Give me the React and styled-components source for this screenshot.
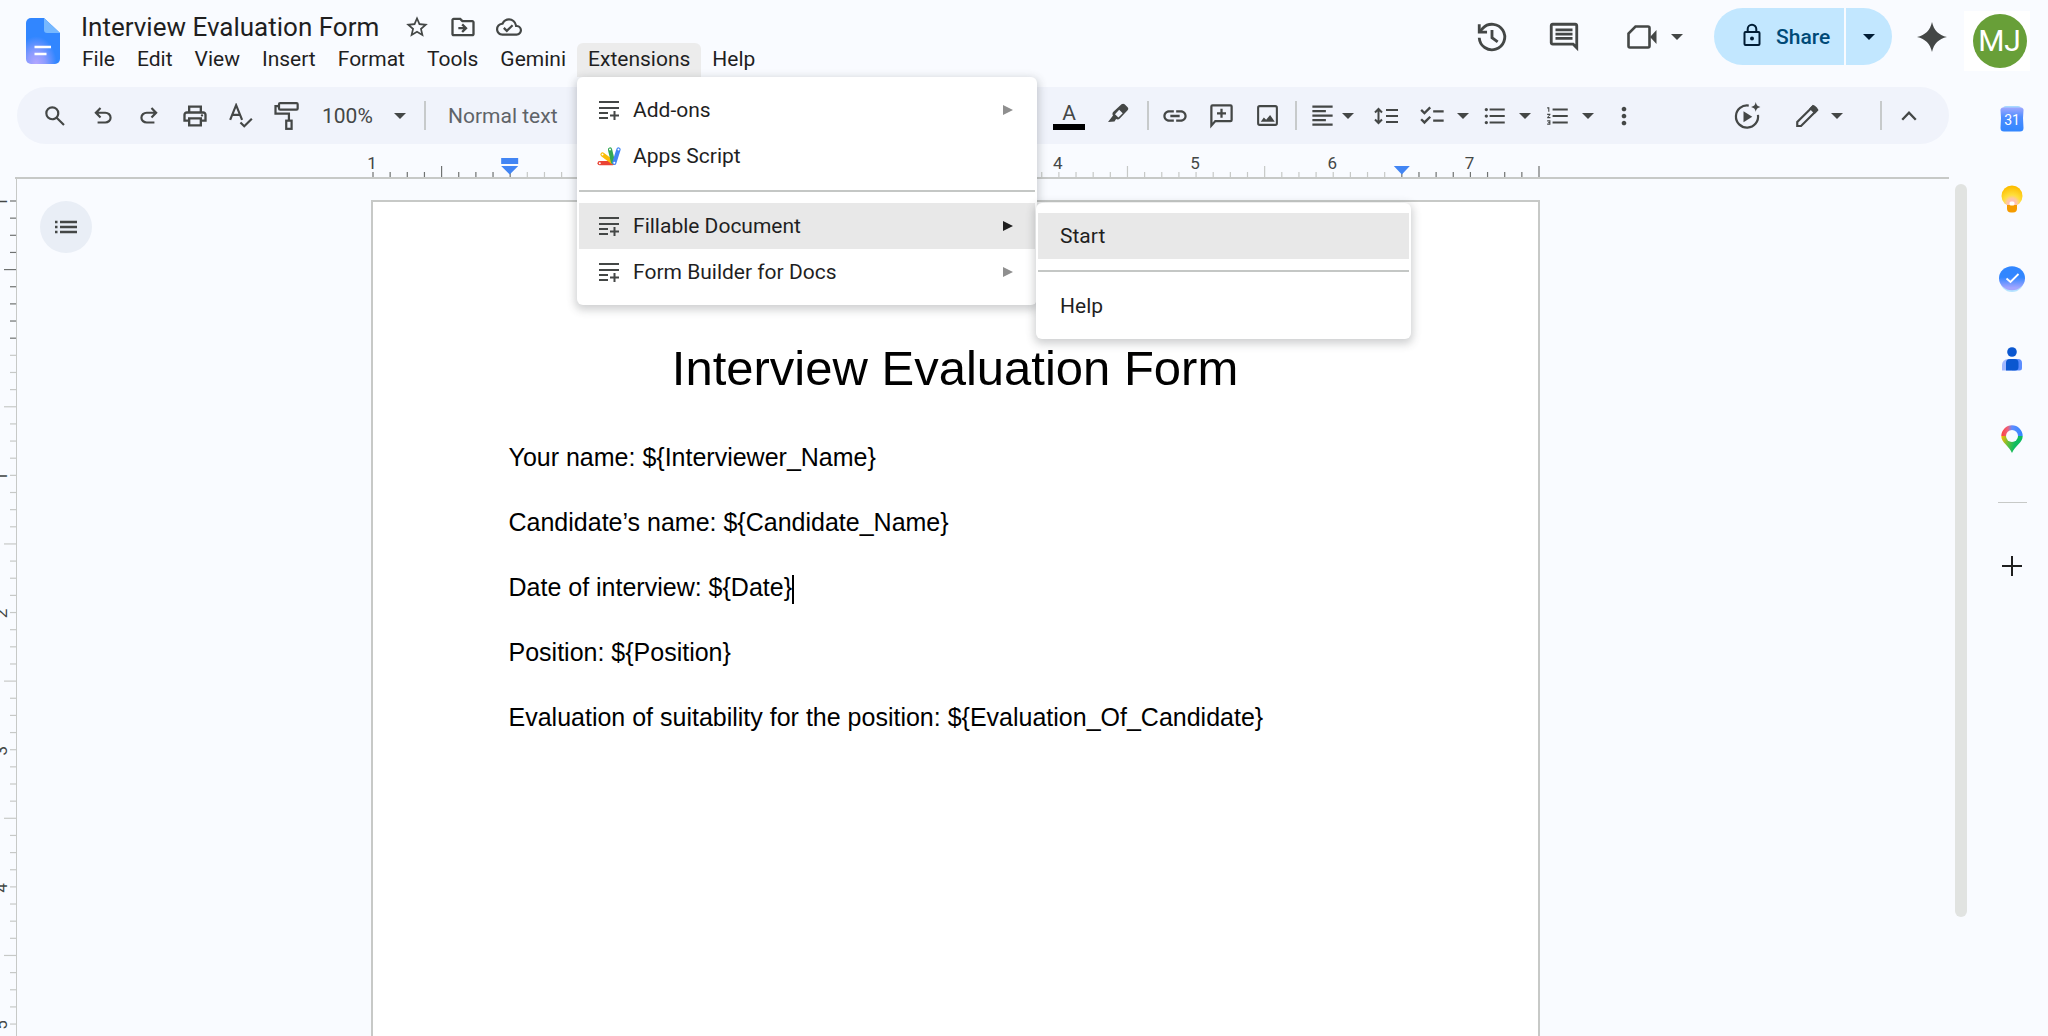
import styled, { createGlobalStyle, css } from "styled-components";
import {
  MdChecklist,
  MdFormatAlignLeft,
  MdFormatListBulleted,
  MdFormatListNumbered,
  MdLink,
  MdMoreVert,
  MdOutlineCloudDone,
  MdOutlineComment,
  MdOutlineDriveFileMove,
  MdStarBorder,
} from "react-icons/md";

const GlobalStyle = createGlobalStyle`
  * {
    box-sizing: border-box;
  }
  body {
    margin: 0;
    background: #f9fbff;
    color: #1f1f1f;
    font-family: Roboto, "Liberation Sans", sans-serif;
    font-size: 21px;
  }
  button, select {
    font: inherit;
    color: inherit;
    border: 0;
    margin: 0;
    padding: 0;
    background: none;
    cursor: pointer;
  }
  svg {
    display: block;
    flex: none;
  }
`;

/* ---------- layout ---------- */

const Shell = styled.div`
  display: flex;
  flex-direction: column;
  height: 100vh;
  overflow: hidden;
`;

const Header = styled.header`
  display: flex;
  align-items: flex-start;
  height: 87px;
  flex: none;
  padding-left: 25px;
  padding-right: 18px;
`;

const LogoLink = styled.a`
  margin-top: 18px;
`;

const TitleBlock = styled.div`
  flex: 1;
  padding-left: 10px;
  padding-top: 11px;
`;

const TitleRow = styled.div`
  display: flex;
  align-items: center;
  height: 32px;
  padding-left: 10px;
  color: #444746;
`;

const DocTitle = styled.h1`
  margin: 0 15px 0 0;
  font-size: 26px;
  line-height: 32px;
  font-weight: 400;
  color: #1f1f1f;
`;

const TitleButton = styled.button`
  display: grid;
  place-items: center;
  width: 46px;
  height: 32px;
`;

const MenuBar = styled.nav`
  display: flex;
`;

const MenuSlot = styled.div`
  position: relative;
`;

const MenuTitle = styled.button`
  height: 34px;
  padding: 0 11px 2px;
  line-height: 32px;
  border-radius: 6px 6px 0 0;
  background: ${(p) => (p.$open ? "#ececec" : "none")};
`;

const floating = css`
  position: absolute;
  background: #fff;
  border-radius: 6px;
  box-shadow: 0 3px 9px 2px rgba(60, 64, 67, 0.24);
`;

const Dropdown = styled.div`
  ${floating}
  z-index: 10;
  top: 100%;
  left: 0;
  width: 460px;
  padding: 10px 2px;
`;

const Submenu = styled.div`
  ${floating}
  top: 126px;
  left: 459px;
  width: 375px;
  padding: 10px 2px;
`;

const MenuItem = styled.button`
  display: flex;
  align-items: center;
  width: 100%;
  height: 46px;
  padding-left: ${(p) => (p.$plain ? "22px" : "18px")};
  padding-right: 22px;
  text-align: left;
  background: ${(p) => (p.$active ? "#e8e8e8" : "none")};
`;

const ItemIcon = styled.span`
  display: grid;
  place-items: center;
  width: 24px;
  margin-right: 12px;
`;

const ItemLabel = styled.span`
  flex: 1;
`;

const Separator = styled.hr`
  height: 2px;
  margin: 11px 0;
  border: 0;
  background: #c4c7c5;
`;

const HeaderTools = styled.div`
  display: flex;
  align-items: flex-start;
  padding-top: 8px;
  color: #444746;
`;

const HeaderButton = styled.button`
  display: flex;
  align-items: center;
  justify-content: center;
  gap: 14px;
  width: ${(p) => p.$w || 72}px;
  height: 57px;
`;

const CallButton = styled(HeaderButton)`
  padding-left: 12px;
`;

const ShareGroup = styled.div`
  display: flex;
  gap: 2px;
  margin: 0 12px 0 16px;
  color: #001d35;
`;

const ShareButton = styled.button`
  display: flex;
  align-items: center;
  gap: 15px;
  width: 130px;
  height: 57px;
  padding-left: 29px;
  border-radius: 29px 0 0 29px;
  background: #c2e7ff;
  color: #004a77;
  font-weight: 500;
`;

const ShareMore = styled.button`
  display: grid;
  place-items: center;
  width: 46px;
  height: 57px;
  border-radius: 0 29px 29px 0;
  background: #c2e7ff;
`;

const AvatarFrame = styled.button`
  display: grid;
  place-items: center;
  width: 66px;
  height: 60px;
  padding-left: 5px;
  margin-left: 4px;
  margin-top: 3px;
  background: #fff;
`;

const Avatar = styled.span`
  width: 54px;
  height: 54px;
  border-radius: 50%;
  background: #689f38;
  color: #fff;
  font-size: 30px;
  line-height: 54px;
`;

const Body = styled.div`
  display: flex;
  flex: 1;
  min-height: 0;
`;

const Main = styled.main`
  display: flex;
  flex-direction: column;
  flex: 1;
  min-width: 0;
`;

/* ---------- toolbar ---------- */

const Toolbar = styled.div`
  display: flex;
  align-items: center;
  height: 57px;
  flex: none;
  margin: 0 27px 0 17px;
  padding-left: 13px;
  padding-right: 17px;
  border-radius: 29px;
  background: #f0f3fb;
  color: #444746;
`;

const ToolButton = styled.button`
  display: grid;
  place-items: center;
  width: ${(p) => p.$w || 46}px;
  height: 46px;
`;

const MenuButton = styled.button`
  display: flex;
  align-items: center;
  justify-content: center;
  gap: ${(p) => (p.$tight ? 6 : 11)}px;
  width: ${(p) => (p.$tight ? 58 : 63)}px;
  height: 46px;
`;

const SelectWrap = styled.label`
  display: flex;
  align-items: center;
  width: ${(p) => p.$w}px;
  padding-left: 14px;
`;

const ToolSelect = styled.select`
  appearance: none;
  width: ${(p) => p.$w}px;
  line-height: 28px;
  color: ${(p) => (p.$muted ? "#5f6368" : "#444746")};
`;

const Divider = styled.span`
  width: 2px;
  height: 29px;
  margin: 0 ${(p) => p.$m}px;
  background: #c7cacb;
`;

const FontTools = styled.div`
  width: 468px;
`;

const EditGap = styled.div`
  width: 26px;
`;

const Spacer = styled.div`
  flex: 1;
`;

const TextColor = styled.span`
  width: 32px;
  border-bottom: 6px solid #000;
  font-size: 21px;
  line-height: 22px;
`;

/* ---------- rulers and page ---------- */

const RulerRow = styled.div`
  display: flex;
  justify-content: center;
  flex: none;
  height: 35px;
  margin: 0 27px 0 15px;
  padding-right: 50px;
  border-bottom: 2px solid #c7c9c7;
`;

const Workspace = styled.div`
  display: flex;
  flex: 1;
  min-height: 0;
`;

const SideRuler = styled.div`
  width: 17px;
  flex: none;
  overflow: hidden;
  border-right: 1px solid #c7c9c7;
`;

const Canvas = styled.div`
  position: relative;
  display: flex;
  justify-content: center;
  flex: 1;
  padding-top: 21px;
  padding-right: 56px;
`;

const OutlineButton = styled.button`
  position: absolute;
  top: 22px;
  left: 23px;
  display: grid;
  place-items: center;
  width: 52px;
  height: 52px;
  border-radius: 50%;
  background: #e9eef6;
`;

const Page = styled.article`
  width: 1169px;
  flex: none;
  padding: 136px;
  border: 2px solid #c7c9c7;
  border-bottom: 0;
  background: #fff;
  color: #000;
  font-family: "Liberation Sans", Arial, sans-serif;
  font-size: 25px;
`;

const PageTitle = styled.h2`
  margin: 0 0 43px;
  font-size: 49px;
  line-height: 60px;
  font-weight: 400;
  text-align: center;
`;

const Line = styled.p`
  margin: 0 0 32px;
  line-height: 33px;
`;

const Caret = styled.span`
  display: inline-block;
  width: 2px;
  height: 29px;
  vertical-align: middle;
  background: #000;
`;

const ScrollTrack = styled.div`
  width: 27px;
  flex: none;
  padding: 5px 9px 0 6px;
`;

const ScrollThumb = styled.div`
  height: 86%;
  border-radius: 6px;
  background: #e1e3e1;
`;

const Rail = styled.aside`
  display: flex;
  flex-direction: column;
  align-items: center;
  width: 72px;
  flex: none;
  padding-top: 9px;
`;

const RailButton = styled.button`
  display: grid;
  place-items: center;
  width: 46px;
  height: 46px;
  margin-bottom: 34px;
`;

const RailRule = styled.hr`
  width: 29px;
  height: 1px;
  margin: 6px 0 40px;
  border: 0;
  background: #c7c9c7;
`;

/* ---------- icons ---------- */

const Symbol = ({ d, size = 28 }) => (
  <svg width={size} height={size} viewBox="0 -960 960 960" fill="currentColor">
    <path d={d} />
  </svg>
);

const Down = () => (
  <svg width="12" height="6" viewBox="0 0 12 6" fill="currentColor">
    <path d="M0 0h12L6 6z" />
  </svg>
);

const Play = ({ color }) => (
  <svg width="10" height="10" viewBox="0 0 10 10">
    <path d="M0 0l10 5-10 5z" fill={color} />
  </svg>
);

const paths = {
  search:
    "M784-120 532-372q-30 24-69 38t-83 14q-109 0-184.5-75.5T120-580q0-109 75.5-184.5T380-840q109 0 184.5 75.5T640-580q0 44-14 83t-38 69l252 252-56 56ZM380-400q75 0 127.5-52.5T560-580q0-75-52.5-127.5T380-760q-75 0-127.5 52.5T200-580q0 75 52.5 127.5T380-400Z",
  undo: "M280-200v-80h284q63 0 109.5-40T720-420q0-60-46.5-100T564-560H312l104 104-56 56-200-200 200-200 56 56-104 104h252q97 0 166.5 63T800-420q0 94-69.5 157T564-200H280Z",
  redo: "M396-200q-97 0-166.5-63T160-420q0-94 69.5-157T396-640h252L544-744l56-56 200 200-200 200-56-56 104-104H396q-63 0-109.5 40T240-420q0 60 46.5 100T396-280h284v80H396Z",
  print:
    "M640-640v-120H320v120h-80v-200h480v200h-80Zm-480 80h640-640Zm560 100q17 0 28.5-11.5T760-500q0-17-11.5-28.5T720-540q-17 0-28.5 11.5T680-500q0 17 11.5 28.5T720-460Zm-80 260v-160H320v160h320Zm80 80H240v-160H80v-240q0-51 35-85.5t85-34.5h560q51 0 85.5 34.5T880-520v240H720v160Zm80-240v-160q0-17-11.5-28.5T760-560H200q-17 0-28.5 11.5T160-520v160h80v-80h480v80h80Z",
};

const DocsLogo = () => (
  <svg width="36" height="46" viewBox="0 0 36 46">
    <defs>
      <radialGradient id="logoGlow" cx="0.3" cy="1" r="0.6">
        <stop offset="0" stopColor="#b3a6ff" />
        <stop offset="0.45" stopColor="#8b9bff" />
        <stop offset="1" stopColor="#3186ff" />
      </radialGradient>
    </defs>
    <path
      d="M6 0h13l16 15v26a5 5 0 0 1-5 5H6a5 5 0 0 1-5-5V5a5 5 0 0 1 5-5z"
      fill="url(#logoGlow)"
    />
    <path d="M19 0l16 15H22a3 3 0 0 1-3-3z" fill="#76b8ff" />
    <path d="M9.500 29h16.500M9.500 36h12" stroke="#fff" strokeWidth="2.600" />
  </svg>
);

const AddonIcon = () => (
  <svg width="20" height="20" viewBox="0 0 20 20" stroke="#444746" strokeWidth="2">
    <path d="M0 2h20M0 8h20M0 13h9M0 18h9M15.500 11v9M11 15.500h9" />
  </svg>
);

const AppsScriptIcon = () => (
  <svg width="24" height="20" viewBox="0 0 24 20" strokeLinecap="round" strokeWidth="4.200">
    <path d="M2.600 17.200h13" stroke="#ea4335" />
    <path d="M5.500 8.500l10 7.500" stroke="#fbbc04" />
    <path d="M13 3.500l3 12.500" stroke="#34a853" />
    <path d="M21.500 3.500l-4.200 13.300" stroke="#4285f4" />
    <g fill="#fff" stroke="none">
      <circle cx="2.800" cy="17.200" r="1" />
      <circle cx="5.500" cy="8.500" r="1" />
      <circle cx="13" cy="3.500" r="1" />
      <circle cx="21.500" cy="3.500" r="1" />
      <circle cx="17.300" cy="16.800" r="1" />
    </g>
  </svg>
);

const Outline = ({ size = 28, w = 2, children }) => (
  <svg
    width={size}
    height={size}
    viewBox="0 0 24 24"
    fill="none"
    stroke="currentColor"
    strokeWidth={w}
  >
    {children}
  </svg>
);

const SpellIcon = () => (
  <Outline size={26}>
    <path d="M2 15.500L7.500 2 13 15.500M4 11h7M11.500 18l3.500 3.500L22 14.500" />
  </Outline>
);

const RollerIcon = () => (
  <Outline w={1.9}>
    <rect x="6" y="1" width="16" height="5.500" rx="1" />
    <path d="M6 3.500H3v6.500h11.500v6" />
    <rect x="12.200" y="16" width="4.600" height="7" />
  </Outline>
);

const HighlighterIcon = () => (
  <svg width="24" height="28" viewBox="0 0 24 28" fill="currentColor">
    <path
      fillRule="evenodd"
      d="M1 20l5-6.500c-1-1.500-.6-2.800.4-3.800L14.500 2.300c1-.9 2.200-.9 3.100 0l3 3c.9.900.9 2.100 0 3L12.800 16.500c-1 1-2.400 1.200-3.700.5L7.500 19.500zM8 12.200l3.400 3.400 4.300-4.400-3.500-3.400z"
    />
  </svg>
);

const AddCommentIcon = () => (
  <Outline size={27}>
    <path d="M3 21V4a1 1 0 0 1 1-1h16a1 1 0 0 1 1 1v12a1 1 0 0 1-1 1H6.500z" />
    <path d="M12 6v8M8 10h8" />
  </Outline>
);

const ImageIcon = () => (
  <Outline size={25}>
    <rect x="3" y="3" width="18" height="18" rx="1.500" />
    <path
      d="M5.500 18l3-4 2.200 2 3.800-4.500L19 18z"
      fill="currentColor"
      stroke="none"
    />
  </Outline>
);

const LineSpacingIcon = () => (
  <svg width="24" height="18" viewBox="0 0 24 18" fill="none" stroke="currentColor" strokeWidth="2">
    <path d="M4.500 2v14M1 5.500L4.500 2 8 5.500M1 12.500L4.500 16 8 12.500" />
    <path d="M12 3h12M12 9h12M12 15h12" />
  </svg>
);

const HistoryIcon = () => (
  <Outline size={34} w={2}>
    <path d="M3 12.500a9 9 0 1 0 2.500-6.700L3.500 8" />
    <path d="M3 3v5.500h5.500" />
    <path d="M12 7v5.500l4 3" />
  </Outline>
);

const VideoIcon = () => (
  <svg width="30" height="24" viewBox="0 0 30 24">
    <path
      d="M8.500 1.500H21a1.500 1.500 0 0 1 1.500 1.500v18a1.500 1.500 0 0 1-1.500 1.500H3A1.500 1.500 0 0 1 1.500 21V8.500z"
      fill="none"
      stroke="currentColor"
      strokeWidth="2.600"
    />
    <path d="M23 12l6.500-7v14z" fill="currentColor" />
  </svg>
);

const LockIcon = () => (
  <svg width="18" height="28" viewBox="0 0 18 28" fill="none" stroke="#001d35" strokeWidth="2">
    <rect x="1.500" y="9" width="15" height="13" rx="1" />
    <path d="M4.700 9V6a4.300 4.300 0 0 1 8.600 0v3" />
    <circle cx="9" cy="15.500" r="2" fill="#001d35" stroke="none" />
  </svg>
);

const SparkIcon = () => (
  <svg width="30" height="30" viewBox="0 0 30 30" fill="#444746">
    <path d="M15 0c2 8.500 6.500 13 15 15-8.500 2-13 6.500-15 15-2-8.500-6.500-13-15-15C8.500 13 13 8.500 15 0z" />
  </svg>
);

const PlaySparkIcon = () => (
  <Outline w={1.9}>
    <path d="M13.500 3.100A9.500 9.500 0 1 0 21.400 11" />
    <path d="M9 8l7.500 4.700L9 17.400z" fill="currentColor" stroke="none" />
    <path
      d="M19.500 0c.5 2.700 1.500 3.700 4 4.200-2.500.6-3.500 1.600-4 4.200-.5-2.600-1.500-3.600-4-4.200 2.500-.5 3.500-1.500 4-4.200z"
      fill="currentColor"
      stroke="none"
    />
  </Outline>
);

const PencilIcon = () => (
  <Outline size={26}>
    <path d="M3 21.200v-3.600L17 3.600a1.500 1.500 0 0 1 2.100 0l1.500 1.500a1.500 1.500 0 0 1 0 2.100L6.500 21.200z" />
    <path d="M15.500 5.100L17.500 3l3.800 3.500-2.200 2.200z" fill="currentColor" />
  </Outline>
);

const ChevronUp = () => (
  <Outline w={2}>
    <path d="M6.200 15.200l5.800-6 5.800 6" />
  </Outline>
);

const OutlineIcon = () => (
  <svg width="22" height="14" viewBox="0 0 22 14" stroke="#444746" strokeWidth="2.400">
    <path d="M0 2h2.500M5 2h17M0 7h2.500M5 7h17M0 12h2.500M5 12h17" />
  </svg>
);

const CalendarIcon = () => (
  <svg width="24" height="26" viewBox="0 0 24 26">
    <defs>
      <linearGradient id="cal" x1="0" y1="0" x2="0" y2="1">
        <stop offset="0" stopColor="#9fa8ff" />
        <stop offset="0.4" stopColor="#4f8dff" />
        <stop offset="1" stopColor="#3186ff" />
      </linearGradient>
    </defs>
    <rect x="3" y="0" width="18" height="6" rx="3" fill="#a8daff" />
    <path
      d="M3 1.500h18a2.500 2.500 0 0 1 2.500 3L23 12l.5 10a3.500 3.500 0 0 1-3.500 3.500H4A3.500 3.500 0 0 1 .5 22L1 12 .5 4.500A2.500 2.500 0 0 1 3 1.500z"
      fill="url(#cal)"
    />
    <text x="12" y="18.500" textAnchor="middle" fontSize="14" fill="#fff">
      31
    </text>
  </svg>
);

const KeepIcon = () => (
  <svg width="22" height="28" viewBox="0 0 22 28">
    <defs>
      <radialGradient id="bulb" cx="0.5" cy="0.85" r="0.8">
        <stop offset="0" stopColor="#ffb3d1" />
        <stop offset="0.3" stopColor="#ffc9a0" />
        <stop offset="0.5" stopColor="#ffdf3d" />
        <stop offset="1" stopColor="#fdbd00" />
      </radialGradient>
    </defs>
    <circle cx="11" cy="11" r="10.500" fill="url(#bulb)" />
    <path d="M6 20h10v3.500a4 4 0 0 1-4 4h-2a4 4 0 0 1-4-4z" fill="#f59b00" />
    <rect x="8.500" y="16.500" width="5" height="4" rx="1.500" fill="#fff" />
  </svg>
);

const TasksIcon = () => (
  <svg width="26" height="26" viewBox="0 0 26 26">
    <defs>
      <linearGradient id="task" x1="0" y1="0" x2="0" y2="1">
        <stop offset="0.45" stopColor="#3186ff" />
        <stop offset="0.9" stopColor="#a3a5ff" />
      </linearGradient>
    </defs>
    <circle cx="13" cy="14" r="12" fill="#b5e3ff" />
    <ellipse cx="13" cy="12.300" rx="13" ry="12" fill="url(#task)" />
    <path d="M7.500 12.500l4 3.500 8-8" fill="none" stroke="#fff" strokeWidth="1.800" />
  </svg>
);

const ContactsIcon = () => (
  <svg width="22" height="24" viewBox="0 0 22 24">
    <circle cx="11" cy="5" r="4.800" fill="#0b57d0" />
    <path d="M1 23.500V18a6 6 0 0 1 6-6h4v11.500z" fill="#a1b8ff" />
    <path d="M11 12h6a4 4 0 0 1 4 4v5a2.500 2.500 0 0 1-2.500 2.500H11z" fill="#5c8dff" />
    <path
      d="M5 23.500V16a4 4 0 0 1 4-4h4.500a4 4 0 0 1 4 4v4a3.500 3.500 0 0 1-3.500 3.500z"
      fill="#0b57d0"
    />
  </svg>
);

const MapsIcon = () => (
  <svg width="22" height="28" viewBox="0 0 22 28">
    <defs>
      <linearGradient id="pinTop" x1="0" y1="0" x2="1" y2="0">
        <stop offset="0" stopColor="#fc413d" />
        <stop offset="0.3" stopColor="#f0607a" />
        <stop offset="0.5" stopColor="#5f8cff" />
        <stop offset="1" stopColor="#3186ff" />
      </linearGradient>
      <linearGradient id="pinLow" x1="0" y1="0" x2="1" y2="0.200">
        <stop offset="0" stopColor="#ffb800" />
        <stop offset="0.4" stopColor="#5fbf3f" />
        <stop offset="0.7" stopColor="#0ebc5f" />
      </linearGradient>
    </defs>
    <path d="M.3 11a10.700 10.700 0 0 1 21.400 0z" fill="url(#pinTop)" />
    <path d="M.3 11h21.400c0 7-7.700 9.500-10.700 17C8 20.500.3 18 .3 11z" fill="url(#pinLow)" />
    <circle cx="11" cy="11" r="6" fill="#f9fbff" />
  </svg>
);

const PlusIcon = () => (
  <svg width="20" height="20" viewBox="0 0 20 20" stroke="#1f1f1f" strokeWidth="2">
    <path d="M10 0v20M0 10h20" />
  </svg>
);

/* ---------- rulers ---------- */

const INCH = 1166 / 8.5;

const TopRuler = () => {
  const ticks = Array.from({ length: 69 }, (_, i) => i);
  return (
    <svg width="1200" height="33" viewBox="-16 0 1200 33" fontSize="17" fill="#444746">
      {ticks.map((i) => (
        <path
          key={i}
          d={`M${(i * INCH) / 8} 33v${i % 8 === 4 ? -11 : -5}`}
          stroke={i < 9 || i >= 60 ? "#6f7271" : "#c7c9c7"}
          strokeWidth="1.200"
        />
      ))}
      {[1, 0, 1, 2, 3, 4, 5, 6, 7].map((n, i) =>
        i === 1 ? null : (
          <text key={i} x={i * INCH - 1} y="25" textAnchor="middle">
            {n}
          </text>
        )
      )}
      <g fill="#4285f4">
        <path d={`M${INCH - 9} 14h17v6h-17zM${INCH - 9} 22h17l-8.500 8.500z`} />
        <path d={`M${7.5 * INCH - 8} 22h16l-8 8.500z`} />
      </g>
    </svg>
  );
};

const LeftRuler = () => {
  const ticks = Array.from({ length: 49 }, (_, i) => i);
  return (
    <svg width="16" height="860" viewBox="0 0 16 860" fontSize="17" fill="#444746">
      {ticks.map((i) => (
        <path
          key={i}
          d={`M16 ${22 + (i * INCH) / 8}h${i % 8 === 4 ? -12 : -6}`}
          stroke={i < 9 ? "#6f7271" : "#c7c9c7"}
          strokeWidth="1.200"
        />
      ))}
      {[1, 0, 1, 2, 3, 4, 5].map((n, i) =>
        i === 1 ? null : (
          <text
            key={i}
            transform={`translate(7 ${23 + i * INCH}) rotate(-90)`}
            textAnchor="middle"
          >
            {n}
          </text>
        )
      )}
    </svg>
  );
};

/* ---------- content ---------- */

const extensionItems = [
  { label: "Add-ons", sub: true },
  { label: "Apps Script", icon: <AppsScriptIcon /> },
  null,
  { label: "Fillable Document", sub: true, active: true },
  { label: "Form Builder for Docs", sub: true },
];

const lines = [
  "Your name: ${Interviewer_Name}",
  "Candidate’s name: ${Candidate_Name}",
  "Date of interview: ${Date}",
  "Position: ${Position}",
  "Evaluation of suitability for the position: ${Evaluation_Of_Candidate}",
];

const railApps = [
  { name: "Calendar", icon: <CalendarIcon /> },
  { name: "Keep", icon: <KeepIcon /> },
  { name: "Tasks", icon: <TasksIcon /> },
  { name: "Contacts", icon: <ContactsIcon /> },
  { name: "Maps", icon: <MapsIcon /> },
];

const ExtensionsMenu = () => (
  <Dropdown role="menu">
    {extensionItems.map((item, i) =>
      item ? (
        <MenuItem key={i} role="menuitem" $active={item.active}>
          <ItemIcon>{item.icon || <AddonIcon />}</ItemIcon>
          <ItemLabel>{item.label}</ItemLabel>
          {item.sub && <Play color={item.active ? "#1f1f1f" : "#8f8f8f"} />}
        </MenuItem>
      ) : (
        <Separator key={i} />
      )
    )}
    <Submenu role="menu">
      <MenuItem role="menuitem" $plain $active>
        Start
      </MenuItem>
      <Separator />
      <MenuItem role="menuitem" $plain>
        Help
      </MenuItem>
    </Submenu>
  </Dropdown>
);

const AppHeader = () => (
  <Header>
    <LogoLink href="#" aria-label="Docs home">
      <DocsLogo />
    </LogoLink>
    <TitleBlock>
      <TitleRow>
        <DocTitle>Interview Evaluation Form</DocTitle>
        <TitleButton aria-label="Star">
          <MdStarBorder size={26} />
        </TitleButton>
        <TitleButton aria-label="Move">
          <MdOutlineDriveFileMove size={28} />
        </TitleButton>
        <TitleButton aria-label="Document status">
          <MdOutlineCloudDone size={26} />
        </TitleButton>
      </TitleRow>
      <MenuBar>
        {["File", "Edit", "View", "Insert", "Format", "Tools", "Gemini", "Extensions", "Help"].map(
          (name) => (
            <MenuSlot key={name}>
              <MenuTitle $open={name === "Extensions"}>{name}</MenuTitle>
              {name === "Extensions" && <ExtensionsMenu />}
            </MenuSlot>
          )
        )}
      </MenuBar>
    </TitleBlock>
    <HeaderTools>
      <HeaderButton aria-label="Version history">
        <HistoryIcon />
      </HeaderButton>
      <HeaderButton aria-label="Comments">
        <MdOutlineComment size={34} />
      </HeaderButton>
      <CallButton aria-label="Join a call" $w={98}>
        <VideoIcon />
        <Down />
      </CallButton>
      <ShareGroup>
        <ShareButton>
          <LockIcon />
          Share
        </ShareButton>
        <ShareMore aria-label="Share options">
          <Down />
        </ShareMore>
      </ShareGroup>
      <HeaderButton aria-label="Gemini" $w={56}>
        <SparkIcon />
      </HeaderButton>
      <AvatarFrame aria-label="Account">
        <Avatar>MJ</Avatar>
      </AvatarFrame>
    </HeaderTools>
  </Header>
);

const DocToolbar = () => (
  <Toolbar role="toolbar">
    <ToolButton aria-label="Search" $w={50}>
      <Symbol d={paths.search} size={26} />
    </ToolButton>
    <ToolButton aria-label="Undo">
      <Symbol d={paths.undo} size={26} />
    </ToolButton>
    <ToolButton aria-label="Redo">
      <Symbol d={paths.redo} size={26} />
    </ToolButton>
    <ToolButton aria-label="Print">
      <Symbol d={paths.print} />
    </ToolButton>
    <ToolButton aria-label="Spelling">
      <SpellIcon />
    </ToolButton>
    <ToolButton aria-label="Paint format" $w={44}>
      <RollerIcon />
    </ToolButton>
    <SelectWrap $w={108}>
      <ToolSelect aria-label="Zoom" $w={72}>
        <option>100%</option>
      </ToolSelect>
      <Down />
    </SelectWrap>
    <Divider $m={8} />
    <SelectWrap $w={142}>
      <ToolSelect aria-label="Styles" $w={128} $muted>
        <option>Normal text</option>
      </ToolSelect>
    </SelectWrap>
    <FontTools />
    <ToolButton aria-label="Text color" $w={50}>
      <TextColor>A</TextColor>
    </ToolButton>
    <ToolButton aria-label="Highlight color" $w={50}>
      <HighlighterIcon />
    </ToolButton>
    <Divider $m={3} />
    <ToolButton aria-label="Insert link">
      <MdLink size={28} />
    </ToolButton>
    <ToolButton aria-label="Add comment">
      <AddCommentIcon />
    </ToolButton>
    <ToolButton aria-label="Insert image">
      <ImageIcon />
    </ToolButton>
    <Divider $m={5} />
    <MenuButton aria-label="Align" $tight>
      <MdFormatAlignLeft size={27} />
      <Down />
    </MenuButton>
    <ToolButton aria-label="Line spacing" $w={52}>
      <LineSpacingIcon />
    </ToolButton>
    <MenuButton aria-label="Checklist">
      <MdChecklist size={28} />
      <Down />
    </MenuButton>
    <MenuButton aria-label="Bulleted list">
      <MdFormatListBulleted size={26} />
      <Down />
    </MenuButton>
    <MenuButton aria-label="Numbered list">
      <MdFormatListNumbered size={26} />
      <Down />
    </MenuButton>
    <ToolButton aria-label="More">
      <MdMoreVert size={28} />
    </ToolButton>
    <Spacer />
    <ToolButton aria-label="Record" $w={80}>
      <PlaySparkIcon />
    </ToolButton>
    <MenuButton aria-label="Editing mode">
      <PencilIcon />
      <Down />
    </MenuButton>
    <EditGap />
    <Divider $m={4} />
    <ToolButton aria-label="Hide the menus">
      <ChevronUp />
    </ToolButton>
  </Toolbar>
);

export default function App() {
  return (
    <Shell>
      <GlobalStyle />
      <AppHeader />
      <Body>
        <Main>
          <DocToolbar />
          <RulerRow>
            <TopRuler />
          </RulerRow>
          <Workspace>
            <SideRuler>
              <LeftRuler />
            </SideRuler>
            <Canvas>
              <OutlineButton aria-label="Show outline">
                <OutlineIcon />
              </OutlineButton>
              <Page>
                <PageTitle>Interview Evaluation Form</PageTitle>
                {lines.map((text, i) => (
                  <Line key={text}>
                    {text}
                    {i === 2 && <Caret />}
                  </Line>
                ))}
              </Page>
            </Canvas>
            <ScrollTrack>
              <ScrollThumb />
            </ScrollTrack>
          </Workspace>
        </Main>
        <Rail>
          {railApps.map((app) => (
            <RailButton key={app.name} aria-label={app.name}>
              {app.icon}
            </RailButton>
          ))}
          <RailRule />
          <RailButton aria-label="Get add-ons">
            <PlusIcon />
          </RailButton>
        </Rail>
      </Body>
    </Shell>
  );
}
